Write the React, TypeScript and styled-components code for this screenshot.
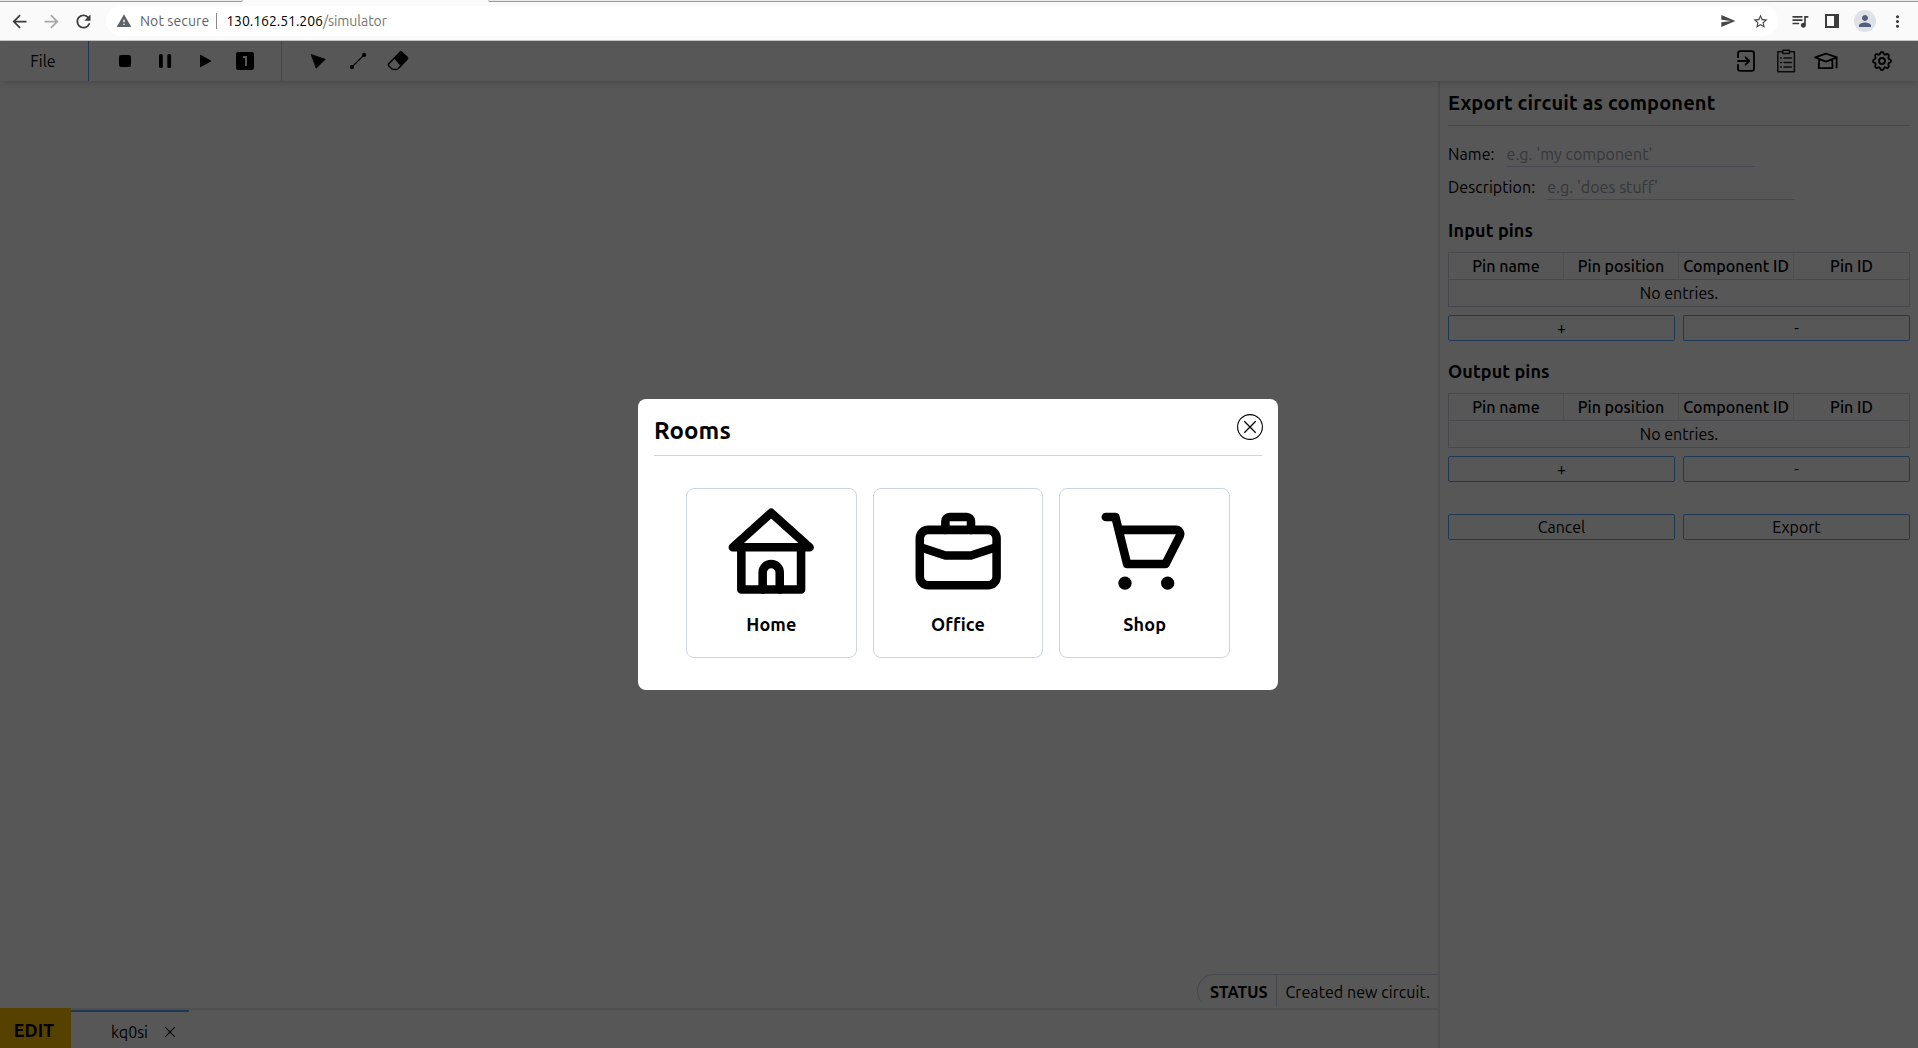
import React from 'react';
import styled, { createGlobalStyle, css } from 'styled-components';
import { MdLooksOne, MdWarning, MdSend, MdStarBorder, MdQueueMusic, MdMoreVert, MdArrowBack, MdArrowForward, MdRefresh, MdPerson } from 'react-icons/md';

const color = {
  line: '#cbd5e1',
  frame: '#e5e7eb',
  blue: '#60a5fa',
  amber: '#ffbf00',
};

const GlobalStyle = createGlobalStyle`
  *, *::before, *::after { box-sizing: border-box; }
  html, body, #root { height: 100%; }
  body {
    margin: 0;
    overflow: hidden;
    font-family: Ubuntu, 'Noto Sans', sans-serif;
    font-size: 16px;
    line-height: 24px;
    color: #000;
    background: #fff;
  }
  svg { display: block; flex: none; }
  h1, h2, h3, p { margin: 0; }
  button, input { font: inherit; color: inherit; background: none; border: 0; padding: 0; }
`;

const Window = styled.div`
  display: flex;
  flex-direction: column;
  height: 1048px;
`;

/* Browser chrome */

const TabStrip = styled.div`
  display: flex;
  flex: none;
  justify-content: space-between;
  height: 2px;
  background: #fafafa;
`;

const TabEdge = styled.div<{ $side: 'left' | 'right' }>`
  height: 2px;
  background: #e9e9e9;
  border-bottom: 1px solid #999;
  ${(p) =>
    p.$side === 'left'
      ? css`width: 243px; border-bottom-right-radius: 3px;`
      : css`width: 1430px; border-bottom-left-radius: 3px;`}
`;

const AddressRow = styled.div`
  display: flex;
  flex: none;
  align-items: center;
  height: 39px;
  padding: 0 11px 0 7px;
  background: #fafafa;
  border-bottom: 1px solid #c4c4c4;
`;

const NavButton = styled.button<{ $muted?: boolean }>`
  display: grid;
  place-items: center;
  width: 24px;
  height: 24px;
  margin-right: 8px;
  color: ${(p) => (p.$muted ? '#a8a8a8' : '#3c3c3c')};
`;

const AddressBar = styled.div`
  display: flex;
  flex: 1;
  align-items: center;
  height: 30px;
  margin: 0 12px 0 3px;
  padding: 0 7px 0 10px;
  border-radius: 15px;
  background: #fff;
  font-size: 14px;
  line-height: 20px;
  color: #5f6368;
`;

const Insecure = styled.span`
  margin-left: 8px;
  letter-spacing: 0.1px;
`;

const AddressDivider = styled.span`
  width: 1px;
  height: 16px;
  margin: 0 9px 0 7px;
  background: #8a8a8a;
`;

const Url = styled.span`
  flex: 1;
  color: #757575;
  letter-spacing: -0.04px;
`;

const Host = styled.span`
  color: #000;
`;

const AddressIcon = styled.span`
  display: grid;
  place-items: center;
  width: 22px;
  margin-left: 10px;
  color: #474747;
`;

const BrowserActions = styled.div`
  display: flex;
  align-items: center;
  gap: 12px;
  color: #3c3c3c;
`;

const Avatar = styled.span`
  display: grid;
  place-items: center;
  width: 22px;
  height: 22px;
  border-radius: 50%;
  background: #dee1e6;
  color: #535f7a;
`;

/* Application */

const Application = styled.div`
  position: relative;
  display: flex;
  flex: 1;
  flex-direction: column;
  min-height: 0;
`;

const Toolbar = styled.header`
  display: flex;
  flex: none;
  align-items: center;
  height: 40px;
  z-index: 1;
  background: #fff;
  box-shadow: 0 4px 6px -1px rgba(0, 0, 0, 0.1), 0 2px 4px -2px rgba(0, 0, 0, 0.1);
`;

const FileMenu = styled.button`
  width: 89px;
  height: 40px;
  padding-right: 2px;
  border-right: 1px solid ${color.blue};
`;

const ToolGroup = styled.div<{ $divided?: boolean }>`
  display: flex;
  align-items: center;
  height: 40px;
  padding: 0 16px;
  ${(p) => p.$divided && css`border-right: 1px solid ${color.line};`}
`;

const ToolButton = styled.button<{ $gap?: number }>`
  display: grid;
  place-items: center;
  width: 40px;
  height: 40px;
  margin-left: ${(p) => p.$gap ?? 0}px;
`;

const ToolbarEnd = styled.div`
  display: flex;
  margin-left: auto;
  padding-right: 16px;
`;

const Body = styled.div`
  display: flex;
  flex: 1;
  min-height: 0;
`;

const Workspace = styled.main`
  display: flex;
  flex: 1;
  flex-direction: column;
  justify-content: flex-end;
`;

const StatusBar = styled.div`
  display: flex;
  align-self: flex-end;
  height: 34px;
  line-height: 35px;
  border: 1px solid ${color.line};
  border-right: 0;
  border-bottom-color: transparent;
  border-radius: 17px 0 0 17px;
`;

const StatusLabel = styled.strong`
  width: 79px;
  padding-left: 12px;
  border-right: 1px solid ${color.line};
  letter-spacing: 0.1px;
`;

const StatusText = styled.span`
  width: 161px;
  padding-left: 8.5px;
  letter-spacing: 0.06px;
  white-space: nowrap;
`;

const TabBar = styled.footer`
  display: flex;
  height: 40px;
`;

const Mode = styled.strong`
  width: 71px;
  padding: 2px 3px 0 0;
  background: ${color.amber};
  font-size: 18px;
  line-height: 40px;
  letter-spacing: 0.1px;
  text-align: center;
`;

const TabTrack = styled.div`
  flex: 1;
  border-top: 2px solid ${color.frame};
`;

const CircuitTab = styled.div`
  display: flex;
  align-items: center;
  justify-content: flex-end;
  gap: 13.5px;
  width: 118px;
  height: 38px;
  padding: 4px 11.5px 0 0;
  border-top: 2px solid ${color.blue};
`;

const Sidebar = styled.aside`
  width: 480px;
  padding: 9px 8px 0;
  border-left: 2px solid ${color.frame};
`;

const PanelTitle = styled.h1`
  height: 36px;
  margin-bottom: 16px;
  border-bottom: 1px solid ${color.line};
  font-size: 20px;
  line-height: 26px;
  letter-spacing: 0.13px;
`;

const Field = styled.label`
  display: flex;
  gap: 12px;
  height: 25px;
  margin-bottom: 8px;
  letter-spacing: 0.06px;
`;

const FieldInput = styled.input`
  width: 248px;
  height: 25px;
  outline: 0;
  border-bottom: 1px solid ${color.line};
  border-radius: 0;
  letter-spacing: 0.04px;
  &::placeholder { color: #9ca3af; opacity: 1; }
`;

const SectionTitle = styled.h2`
  margin: 17px 0 8px;
  font-size: 18px;
  line-height: 27px;
  letter-spacing: 0.1px;
`;

const PinTable = styled.div`
  display: grid;
  grid-template-columns: repeat(4, 1fr);
  height: 55px;
  border: 1px solid ${color.line};
  line-height: 26px;
  text-align: center;
`;

const PinHead = styled.div`
  height: 27px;
  font-weight: 500;
  border-bottom: 1px solid ${color.line};
  white-space: nowrap;
  &:not(:nth-child(4)) { border-right: 1px solid ${color.frame}; }
`;

const PinEmpty = styled.div`
  grid-column: 1 / -1;
`;

const ButtonRow = styled.div<{ $top: number }>`
  display: grid;
  grid-template-columns: 1fr 1fr;
  gap: 8px;
  margin-top: ${(p) => p.$top}px;
`;

const OutlineButton = styled.button`
  height: 26px;
  border: 1px solid ${color.blue};
  border-radius: 2px;
  line-height: 24px;
`;

/* Dialog */

const Backdrop = styled.div`
  position: absolute;
  inset: 0;
  z-index: 2;
  display: flex;
  align-items: center;
  justify-content: center;
  background: rgba(0, 0, 0, 0.66);
`;

const Dialog = styled.section`
  width: 640px;
  height: 291px;
  margin-right: 2px;
  padding: 16px;
  border-radius: 8px;
  background: #fff;
`;

const DialogHeader = styled.div`
  display: flex;
  justify-content: space-between;
  height: 41px;
  border-bottom: 1px solid ${color.line};
`;

const DialogTitle = styled.h2`
  font-size: 24px;
  line-height: 32px;
  letter-spacing: 0.15px;
`;

const CloseButton = styled.button`
  width: 26px;
  height: 26px;
  margin: -1px -1px 0 0;
`;

const RoomGrid = styled.div`
  display: grid;
  grid-template-columns: repeat(3, 1fr);
  gap: 16px;
  padding: 32px;
`;

const RoomCard = styled.button`
  display: flex;
  flex-direction: column;
  align-items: center;
  justify-content: flex-start;
  height: 170px;
  padding-top: 11px;
  border: 1px solid ${color.line};
  border-radius: 8px;
`;

const RoomName = styled.span`
  margin-top: 8px;
  font-size: 18px;
  font-weight: 700;
  line-height: 28px;
  letter-spacing: 0.1px;
`;

const RoomIcon = ({ children }: { children: React.ReactNode }) => (
  <svg width="102.4" height="102.4" viewBox="0 0 24 24" fill="none" stroke="currentColor" strokeWidth="2" strokeLinecap="round" strokeLinejoin="round">
    {children}
  </svg>
);

const Glyph = ({ children }: { children: React.ReactNode }) => (
  <svg width="24" height="24" viewBox="0 0 24 24" fill="currentColor" strokeLinejoin="round" strokeLinecap="round">
    {children}
  </svg>
);

const rooms = [
  {
    name: 'Home',
    art: <><path d="M12 3 21 11.1H3Z" /><path d="M5 11v10h14V11" /><path d="M10 21v-4a2 2 0 0 1 4 0v4" /></>,
  },
  {
    name: 'Office',
    art: <><rect x="3" y="7" width="18" height="13" rx="2" /><path d="M9 7V5a1 1 0 0 1 1-1h4a1 1 0 0 1 1 1v2" /><path d="M3.5 11.2 9 13h6l5.5-1.8" /></>,
  },
  {
    name: 'Shop',
    art: <><path d="M3 4h2.25L8 15h9l3.35-6.6a1 1 0 0 0-.9-1.4H6" /><g fill="currentColor" stroke="none"><circle cx="7.5" cy="19.5" r="1.55" /><circle cx="17.5" cy="19.5" r="1.55" /></g></>,
  },
];

const PinSection = ({ title }: { title: string }) => (
  <>
    <SectionTitle>{title}</SectionTitle>
    <PinTable>
      {['Pin name', 'Pin position', 'Component ID', 'Pin ID'].map((h) => <PinHead key={h}>{h}</PinHead>)}
      <PinEmpty>No entries.</PinEmpty>
    </PinTable>
    <ButtonRow $top={8}>
      <OutlineButton>+</OutlineButton>
      <OutlineButton>-</OutlineButton>
    </ButtonRow>
  </>
);

export default function App() {
  return (
    <Window>
      <GlobalStyle />
      <TabStrip><TabEdge $side="left" /><TabEdge $side="right" /></TabStrip>
      <AddressRow>
        <NavButton><MdArrowBack size={21} /></NavButton>
        <NavButton $muted><MdArrowForward size={21} /></NavButton>
        <NavButton><MdRefresh size={21} /></NavButton>
        <AddressBar>
          <MdWarning size={16} />
          <Insecure>Not secure</Insecure>
          <AddressDivider />
          <Url><Host>130.162.51.206</Host>/simulator</Url>
          <AddressIcon><MdSend size={16} /></AddressIcon>
          <AddressIcon><MdStarBorder size={17} /></AddressIcon>
        </AddressBar>
        <BrowserActions>
          <MdQueueMusic size={20} />
          <svg width="20" height="20" viewBox="0 0 20 20"><path fill="currentColor" fillRule="evenodd" d="M3 3h14v14H3zM5 5v10h7V5z" /></svg>
          <Avatar><MdPerson size={18} /></Avatar>
          <MdMoreVert size={19} />
        </BrowserActions>
      </AddressRow>

      <Application>
        <Toolbar>
          <FileMenu>File</FileMenu>
          <ToolGroup $divided>
            <ToolButton><Glyph><rect x="6" y="6" width="12" height="12" rx="2" /></Glyph></ToolButton>
            <ToolButton><Glyph><rect x="6" y="5" width="3.8" height="14" rx="1.6" /><rect x="14.3" y="5" width="3.8" height="14" rx="1.6" /></Glyph></ToolButton>
            <ToolButton><Glyph><path stroke="currentColor" strokeWidth="1.2" d="M7.6 6.4v11.2L17.5 12z" /></Glyph></ToolButton>
            <ToolButton><MdLooksOne size={24} /></ToolButton>
          </ToolGroup>
          <ToolGroup>
            <ToolButton><Glyph><path stroke="currentColor" strokeWidth=".8" d="M5.5 5.7 19.2 10.3 14.9 14.6 10.4 19z" /></Glyph></ToolButton>
            <ToolButton><Glyph><path stroke="currentColor" strokeWidth="1.1" d="M5.5 18.5 18.5 5.5" /><circle cx="5.9" cy="18.1" r="2.1" /><circle cx="18.1" cy="5.9" r="2.1" /></Glyph></ToolButton>
            <ToolButton>
              <Glyph>
                <path fill="none" stroke="currentColor" strokeWidth="1.5" d="M14.1 3.2a1.2 1.2 0 0 1 1.7 0l5.4 5.2a1.2 1.2 0 0 1 0 1.7L12.4 19.6a3 3 0 0 1-2.2.9H7.6a3 3 0 0 1-2.1-.9L2.9 17a1.7 1.7 0 0 1 0-2.4z" />
                <path d="M15 2.8 21.8 9.2 14.6 17 8.2 9.6z" />
              </Glyph>
            </ToolButton>
          </ToolGroup>
          <ToolbarEnd>
            <ToolButton>
              <Glyph><path fill="none" stroke="currentColor" strokeWidth="1.8" d="M4 8.2V4.6a2.4 2.4 0 0 1 2.4-2.4h11.2A2.4 2.4 0 0 1 20 4.6v14.8a2.4 2.4 0 0 1-2.4 2.4H6.4A2.4 2.4 0 0 1 4 19.4v-3.6M4 12h11M11.5 8.3 15.3 12l-3.8 3.7" /></Glyph>
            </ToolButton>
            <ToolButton>
              <Glyph><path fill="none" stroke="#222" strokeWidth="1.5" d="M8.5 2.8H3.8V22.8H20.4V2.8H15.7M8.8 1.2H15.4V4.6H8.8z" /><path fill="none" stroke="#222" strokeWidth="1.3" d="M6.5 9h1M6.5 13.5h1M6.5 18h1M10 9h7.5M10 13.5h7.5M10 18h7.5" /></Glyph>
            </ToolButton>
            <ToolButton>
              <Glyph><path fill="none" stroke="currentColor" strokeWidth="1.8" d="M1.2 8.3 12 4.6 23 8.3 12 12.6zM5.2 10.5 4.7 19.2H18.6L18.2 10.5M22.6 8.8V18.6" /></Glyph>
            </ToolButton>
            <ToolButton $gap={16}>
              <Glyph><path fill="none" stroke="currentColor" strokeWidth="1.9" d="M10.325 4.317c.426-1.756 2.924-1.756 3.35 0a1.724 1.724 0 0 0 2.573 1.066c1.543-.94 3.31.826 2.37 2.37a1.724 1.724 0 0 0 1.065 2.572c1.756.426 1.756 2.924 0 3.35a1.724 1.724 0 0 0-1.066 2.573c.94 1.543-.826 3.31-2.37 2.37a1.724 1.724 0 0 0-2.572 1.065c-.426 1.756-2.924 1.756-3.35 0a1.724 1.724 0 0 0-2.573-1.066c-1.543.94-3.31-.826-2.37-2.37a1.724 1.724 0 0 0-1.065-2.572c-1.756-.426-1.756-2.924 0-3.35a1.724 1.724 0 0 0 1.066-2.573c-.94-1.543.826-3.31 2.37-2.37 1 .608 2.296.07 2.572-1.065z" /><circle cx="12" cy="12" r="3" fill="none" stroke="currentColor" strokeWidth="1.9" /></Glyph>
            </ToolButton>
          </ToolbarEnd>
        </Toolbar>

        <Body>
          <Workspace>
            <StatusBar>
              <StatusLabel>STATUS</StatusLabel>
              <StatusText>Created new circuit.</StatusText>
            </StatusBar>
            <TabBar>
              <Mode>EDIT</Mode>
              <TabTrack>
                <CircuitTab>
                  kq0si
                  <svg width="16" height="16" viewBox="0 0 16 16" stroke="currentColor" strokeWidth="1.2"><path d="M3.2 3.2 12.8 12.8M12.8 3.2 3.2 12.8" /></svg>
                </CircuitTab>
              </TabTrack>
            </TabBar>
          </Workspace>

          <Sidebar>
            <PanelTitle>Export circuit as component</PanelTitle>
            <Field>Name:<FieldInput placeholder="e.g. 'my component'" /></Field>
            <Field>Description:<FieldInput placeholder="e.g. 'does stuff'" /></Field>
            <PinSection title="Input pins" />
            <PinSection title="Output pins" />
            <ButtonRow $top={32}>
              <OutlineButton>Cancel</OutlineButton>
              <OutlineButton>Export</OutlineButton>
            </ButtonRow>
          </Sidebar>
        </Body>

        <Backdrop>
          <Dialog>
            <DialogHeader>
              <DialogTitle>Rooms</DialogTitle>
              <CloseButton>
                <svg width="26" height="26" viewBox="0 0 26 26" fill="none" stroke="currentColor" strokeWidth="1.1"><circle cx="13" cy="13" r="12.4" /><path strokeWidth="1.3" d="M7.3 7.3 18.7 18.7M18.7 7.3 7.3 18.7" /></svg>
              </CloseButton>
            </DialogHeader>
            <RoomGrid>
              {rooms.map((room) => (
                <RoomCard key={room.name}>
                  <RoomIcon>{room.art}</RoomIcon>
                  <RoomName>{room.name}</RoomName>
                </RoomCard>
              ))}
            </RoomGrid>
          </Dialog>
        </Backdrop>
      </Application>
    </Window>
  );
}
